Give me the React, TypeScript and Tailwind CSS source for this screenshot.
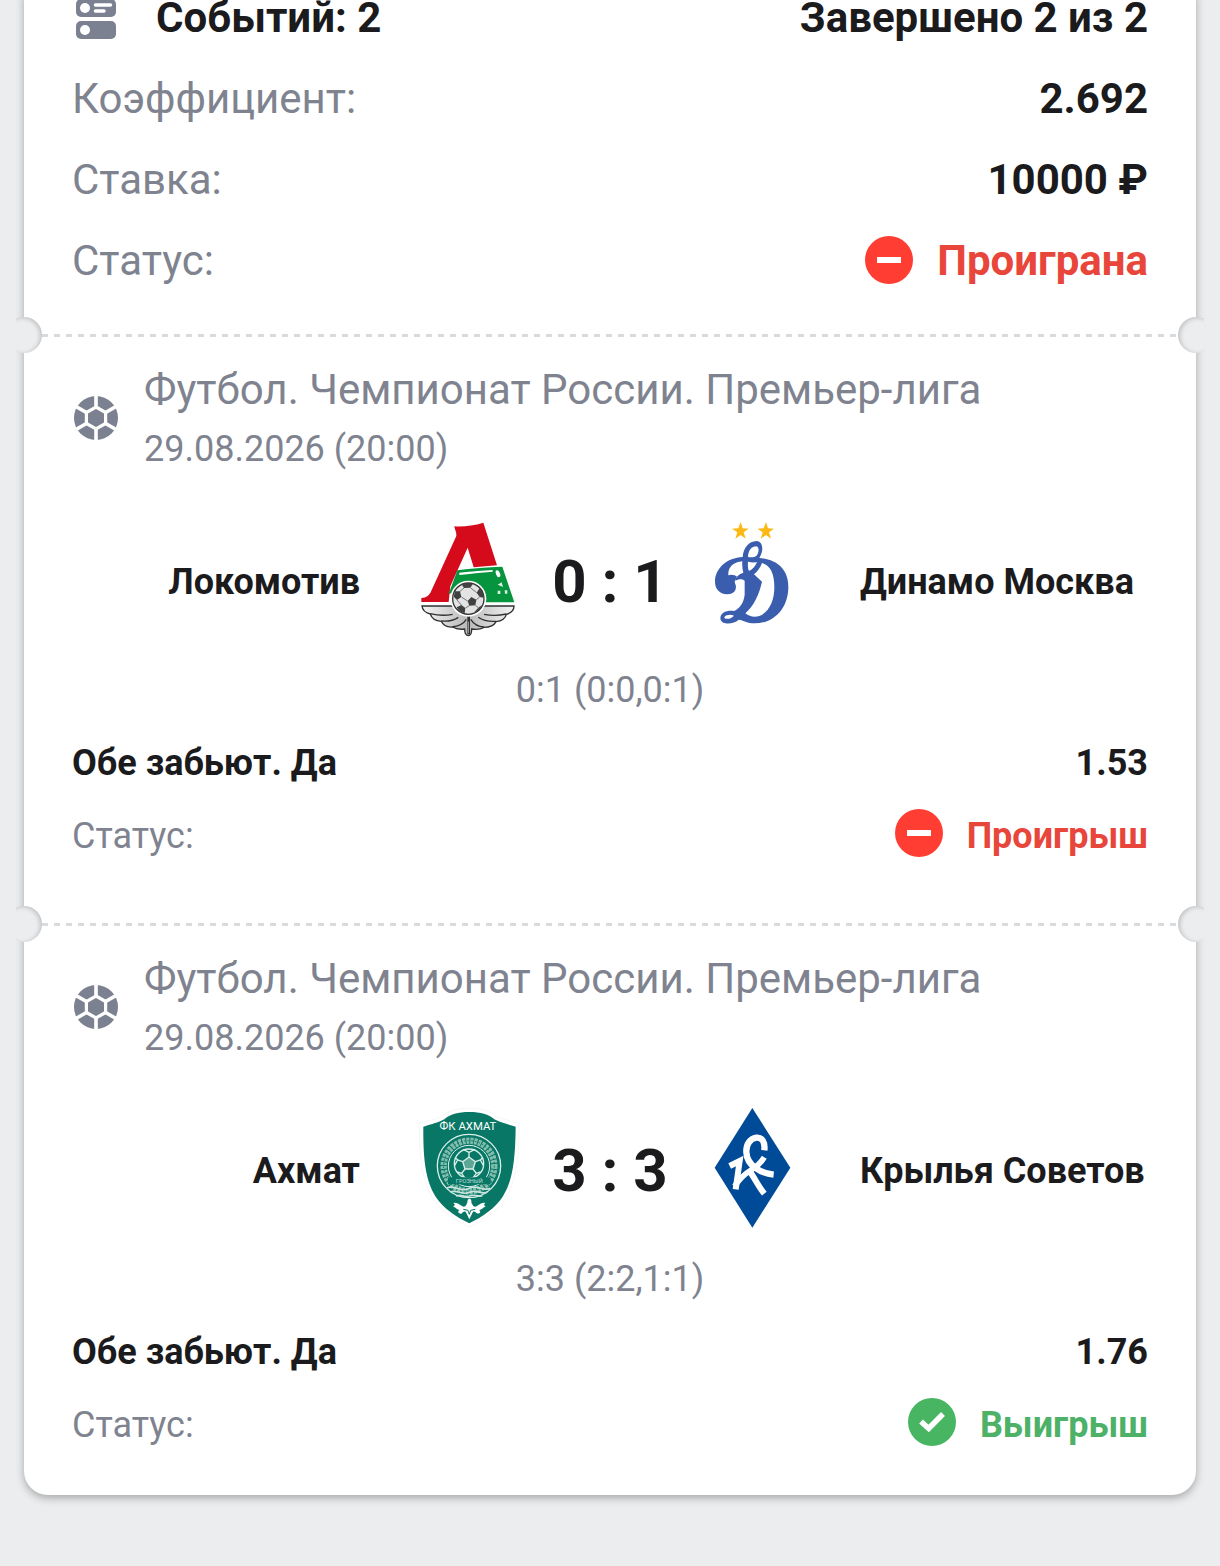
import type { ReactNode } from 'react';

type Outcome = 'lose' | 'win';

interface BetEvent {
  league: string;
  date: string;
  home: string;
  away: string;
  homeLogo: ReactNode;
  awayLogo: ReactNode;
  score: string;
  periods: string;
  market: string;
  odds: string;
  outcome: Outcome;
  status: string;
}

function ExpressIcon() {
  return (
    <svg className="w-12 h-12 shrink-0" viewBox="0 0 48 48" aria-hidden="true">
      <rect x="4" y="5" width="40" height="18" rx="5" fill="#7c8192" />
      <rect x="4" y="27" width="40" height="18" rx="5" fill="#7c8192" />
      <circle cx="13" cy="14" r="5" fill="#fff" />
      <circle cx="13" cy="36" r="5" fill="#fff" />
      <path d="M23.500 11H38.500M23.500 17H32" stroke="#fff" strokeWidth="3.500" strokeLinecap="round" />
    </svg>
  );
}

function FootballIcon() {
  return (
    <svg className="w-12 h-12 shrink-0" viewBox="0 0 48 48" aria-hidden="true">
      <circle cx="24" cy="24" r="22" fill="#7c8192" />
      <path
        d="M24 13L33.600 18.500V29.500L24 35L14.400 29.500V18.500Z"
        fill="none"
        stroke="#fff"
        strokeWidth="3.200"
      />
      <path
        d="M24 13V0M24 35V48M33.600 18.500L46 11.400M33.600 29.500L46 36.600M14.400 18.500L2 11.400M14.400 29.500L2 36.600"
        stroke="#fff"
        strokeWidth="3.600"
      />
    </svg>
  );
}

function OutcomeIcon({ outcome }: { outcome: Outcome }) {
  if (outcome === 'win') {
    return (
      <svg className="w-12 h-12 shrink-0" viewBox="0 0 48 48" aria-hidden="true">
        <circle cx="24" cy="24" r="24" fill="#48b563" />
        <path d="M13 23.500L20.700 30.500L35 16" fill="none" stroke="#fff" strokeWidth="5.500" />
      </svg>
    );
  }
  return (
    <svg className="w-12 h-12 shrink-0" viewBox="0 0 48 48" aria-hidden="true">
      <circle cx="24" cy="24" r="24" fill="#ff3d32" />
      <rect x="12" y="21" width="24" height="6" fill="#fff" />
    </svg>
  );
}

function LokomotivLogo() {
  return (
    <svg className="w-[120px] h-[120px] shrink-0" viewBox="24 42 360 360" role="img" aria-label="Локомотив">
      <defs>
        <linearGradient id="wing" x1="0" x2="1">
          <stop offset="0" stopColor="#f4f4f4" />
          <stop offset="0.500" stopColor="#b9b9b9" />
          <stop offset="1" stopColor="#f4f4f4" />
        </linearGradient>
      </defs>
      <path
        d="M66 303H342C342 316 334 324 319 328C316 341 304 348 288 350C282 362 268 367 252 367C240 374 226 374 215 372C215 386 213 392 205 392C197 392 194 384 194 372C180 374 167 372 158 366C142 367 129 361 124 349C106 348 95 340 91 327C76 323 67 316 66 303Z"
        fill="url(#wing)"
        stroke="#2f3030"
        strokeWidth="4"
      />
      <path
        d="M91 326C112 331 132 333 158 328M124 348C145 350 160 347 175 337M157 365C176 364 190 357 199 343M319 327C298 332 276 333 252 328M288 349C264 350 248 347 235 337M252 366C232 365 221 357 212 343"
        fill="none"
        stroke="#2f3030"
        strokeWidth="4"
      />
      <path d="M206 332V388" stroke="#2f3030" strokeWidth="8" />
      <path d="M205 350V384" stroke="#aaa" strokeWidth="3" />
      <path
        d="M163 64C190 66 221 62 250 53L291 181L221 187L203 128L151 244L146 291H64V279C80 278 88 271 94 257L169 93C170 80 164 74 163 64Z"
        fill="#d50b1c"
      />
      <path
        d="M172 196C215 189 262 187 307 185L343 292H252L240 240L146 267Z"
        fill="#07943f"
      />
      <path d="M178 203C215 199 251 197 278 195V200C243 202 210 207 178 210Z" fill="#fff" />
      <ellipse cx="294" cy="206" rx="6" ry="11" fill="#fff" transform="rotate(-22 294 206)" />
      <path d="M293 239l12 -7l4 14zM293 257h8v10h-8zM314 256h8v10h-7z" fill="#d9f2df" />
      <circle cx="205" cy="281" r="54" fill="#fff" />
      <circle cx="205" cy="281" r="47" fill="#e3e3e3" stroke="#333" strokeWidth="4" />
      <g fill="#414141">
        <path d="M184 237C194 233 210 233 218 238L211 248L192 249Z" />
        <path d="M239 249C247 256 251 268 251 278L239 276L230 263Z" />
        <path d="M214 276L229 284L226 301L208 302L203 288Z" />
        <path d="M165 259L180 259L184 276L171 285L161 275Z" />
        <path d="M170 307L184 300L196 309L194 325C184 323 176 318 170 307Z" />
        <path d="M224 320L235 308L246 300C241 312 234 319 224 324Z" />
      </g>
      <path
        d="M192 249L180 259M211 248L230 263M184 276L203 288M184 300L171 285M196 309L208 302M229 284L239 276M226 301L235 308"
        stroke="#777"
        strokeWidth="3"
      />
    </svg>
  );
}

function DynamoLogo() {
  return (
    <svg className="w-[120px] h-[120px] shrink-0" viewBox="6 42 360 360" role="img" aria-label="Динамо Москва">
      <g fill="#fdb913">
        <path d="M152 51L158 70L176 71L161 82L167 101L152 90L136 101L142 82L126 71L145 70Z" />
        <path d="M228 51L234 70L252 71L237 82L243 101L228 90L212 101L218 82L202 71L221 70Z" />
      </g>
      <path
        fill="#3a5dae"
        fillRule="evenodd"
        d="M137 240C141 257 129 269 111 268C88 267 75 251 75 230C75 190 111 158 158 156C160 129 176 109 200 108C214 109 219 123 216 139C214 148 211 154 208 159C263 164 295 194 295 245C295 309 253 355 194 355C172 355 160 346 146 344C136 353 121 357 107 355C94 353 89 344 92 334C96 322 111 315 132 318C149 310 161 294 164 269V227C155 220 145 222 135 227C138 215 147 207 160 203C157 192 156 181 157 169C130 171 113 187 115 211C124 207 135 210 142 216C134 222 132 231 137 240ZM174 156C185 158 193 157 199 153C208 141 208 126 199 124C185 124 175 136 174 156ZM174 170C173 183 174 192 177 198C188 194 196 183 201 172C192 172 183 173 174 170ZM216 174C211 187 203 199 192 208L216 230C207 270 192 301 166 325C178 334 192 338 208 333C239 321 253 285 253 247C253 207 242 181 216 174ZM107 341C117 343 126 339 132 332C121 327 109 330 104 335C102 338 103 340 107 341Z"
      />
    </svg>
  );
}

function AkhmatLogo() {
  return (
    <svg className="w-[120px] h-[120px] shrink-0" viewBox="24 39 360 360" role="img" aria-label="Ахмат">
      <path
        d="M208 40C244 40 271 47 290 65C306 72 330 77 356 84C358 199 346 266 314 315C290 351 249 376 208 396C167 376 126 351 102 315C69 266 57 199 58 84C84 77 108 72 124 65C143 47 171 40 208 40Z"
        fill="#fff"
        stroke="#eff2f1"
        strokeWidth="2"
      />
      <path
        d="M208 51C242 51 266 58 283 73C298 82 321 87 347 95C346 198 337 260 308 305C285 341 246 365 208 385C169 365 130 341 107 305C78 260 69 198 70 95C95 87 118 82 133 73C150 58 174 51 208 51Z"
        fill="#087766"
      />
      <text
        x="204"
        y="105"
        textAnchor="middle"
        fill="#fff"
        fontSize="34"
        className="font-['Roboto',sans-serif] font-normal"
      >
        ФК АХМАТ
      </text>
      <g fill="none" stroke="#d8efe9">
        <circle cx="207" cy="213" r="95" strokeWidth="4" />
        <circle cx="207" cy="213" r="76" stroke="#82bdae" strokeWidth="19" strokeDasharray="9 3" />
        <circle cx="207" cy="213" r="76" stroke="#087766" strokeWidth="3" strokeDasharray="5 6" />
        <circle cx="207" cy="213" r="62" strokeWidth="3" />
      </g>
      <circle cx="207" cy="206" r="44" fill="#087766" stroke="#d8efe9" strokeWidth="4" />
      <path
        d="M207 186L226 200L219 222H195L188 200Z"
        fill="#5ea696"
        stroke="#d8efe9"
        strokeWidth="4"
      />
      <path
        d="M207 186V172L190 163M207 172L225 163M226 200L241 195L248 188M241 195L250 211M219 222L229 235L220 247M229 235L242 231M195 222L185 235L193 247M185 235L172 231M188 200L173 195L166 188M173 195L164 211"
        fill="none"
        stroke="#d8efe9"
        strokeWidth="4"
      />
      <path d="M144 247H272V268H144Z" fill="#087766" />
      <text
        x="208"
        y="263"
        textAnchor="middle"
        fill="#b7dcd3"
        fontSize="17"
        className="font-['Roboto',sans-serif] font-normal"
      >
        ГРОЗНЫЙ
      </text>
      <path
        d="M141 279C164 267 176 293 204 281C233 266 247 291 271 280M151 291C171 282 186 303 208 292C230 281 244 301 262 291M168 303C183 296 193 308 208 303C224 296 234 307 247 302"
        fill="none"
        stroke="#c7e4dd"
        strokeWidth="5"
      />
      <path
        d="M160 324C173 321 181 333 191 335C199 335 199 326 202 324C201 316 205 311 208 311C212 311 216 317 214 324C217 326 218 335 226 335C236 333 243 321 256 324C250 328 252 332 257 335C249 336 246 344 237 345C245 350 239 358 231 355C227 354 227 348 219 350L208 373L197 350C189 348 189 354 184 356C176 357 171 349 179 345C171 344 167 336 159 335C166 331 166 328 160 324Z"
        fill="#fff"
      />
      <path d="M190 343L204 346L208 358L212 346L226 343" fill="none" stroke="#087766" strokeWidth="3" />
    </svg>
  );
}

function KrylyaLogo() {
  return (
    <svg className="w-[120px] h-[120px] shrink-0" viewBox="6 39 360 360" role="img" aria-label="Крылья Советов">
      <path d="M187 39L301 218L187 398L74 218Z" fill="#004b98" />
      <path
        d="M223 166C226 141 216 126 199 128C180 131 168 148 169 171C170 193 180 208 197 219C212 230 230 237 251 239"
        fill="none"
        stroke="#fff"
        strokeWidth="19"
      />
      <path
        d="M223 187C213 203 199 216 182 226C162 238 148 252 134 274"
        fill="none"
        stroke="#fff"
        strokeWidth="17"
      />
      <path
        d="M119 213L149 198L137 283M178 228C193 246 203 272 223 296"
        fill="none"
        stroke="#fff"
        strokeWidth="18"
      />
    </svg>
  );
}

const events: BetEvent[] = [
  {
    league: 'Футбол. Чемпионат России. Премьер-лига',
    date: '29.08.2026 (20:00)',
    home: 'Локомотив',
    away: 'Динамо Москва',
    homeLogo: <LokomotivLogo />,
    awayLogo: <DynamoLogo />,
    score: '0 : 1',
    periods: '0:1 (0:0,0:1)',
    market: 'Обе забьют. Да',
    odds: '1.53',
    outcome: 'lose',
    status: 'Проигрыш',
  },
  {
    league: 'Футбол. Чемпионат России. Премьер-лига',
    date: '29.08.2026 (20:00)',
    home: 'Ахмат',
    away: 'Крылья Советов',
    homeLogo: <AkhmatLogo />,
    awayLogo: <KrylyaLogo />,
    score: '3 : 3',
    periods: '3:3 (2:2,1:1)',
    market: 'Обе забьют. Да',
    odds: '1.76',
    outcome: 'win',
    status: 'Выигрыш',
  },
];

function TicketDivider() {
  return (
    <div className="relative h-9 flex items-center px-[18px]" aria-hidden="true">
      <span className="absolute -left-2 top-0 w-[26px] h-9 flex justify-end overflow-hidden">
        <span className="w-9 h-9 shrink-0 rounded-full bg-[#ebedef] shadow-[inset_-2px_1px_4px_rgba(0,0,0,0.18)]" />
      </span>
      <span className="absolute -right-2 top-0 w-[26px] h-9 flex justify-start overflow-hidden">
        <span className="w-9 h-9 shrink-0 rounded-full bg-[#ebedef] shadow-[inset_2px_1px_4px_rgba(0,0,0,0.18)]" />
      </span>
      <div className="h-[3px] flex-1 bg-[repeating-linear-gradient(90deg,#d9dadb_0_6px,transparent_6px_12px)]" />
    </div>
  );
}

function SummaryRow({ label, children }: { label: string; children: ReactNode }) {
  return (
    <div className="flex items-center justify-between">
      <dt className="text-[#7f838f]">{label}</dt>
      <dd className="font-bold">{children}</dd>
    </div>
  );
}

function EventSection({ event }: { event: BetEvent }) {
  return (
    <section className="px-12 pt-3 pb-[43px] text-[36px] leading-[42px]">
      <header className="flex items-center gap-6 text-[#7f838f]">
        <FootballIcon />
        <div>
          <h2 className="text-[42px] leading-[50px]">{event.league}</h2>
          <p className="mt-[13px]">{event.date}</p>
        </div>
      </header>

      <div className="mt-[49px] grid grid-cols-[1fr_auto_1fr] items-center gap-12 font-bold">
        <span className="pt-1.5 text-right">{event.home}</span>
        <div className="flex items-center">
          {event.homeLogo}
          <span className="w-[164px] pt-1.5 text-center text-[60px] leading-[72px]">{event.score}</span>
          {event.awayLogo}
        </div>
        <span className="pt-1.5 whitespace-nowrap">{event.away}</span>
      </div>

      <p className="mt-[30px] text-center text-[#7f838f]">{event.periods}</p>

      <div className="mt-[31px] flex justify-between font-bold">
        <span>{event.market}</span>
        <span>{event.odds}</span>
      </div>

      <div className="mt-[25px] flex justify-between leading-[54px]">
        <span className="text-[#7f838f]">Статус:</span>
        <span
          className={`flex items-start gap-6 font-bold ${event.outcome === 'win' ? 'text-[#4db167]' : 'text-[#e8463a]'}`}
        >
          <OutcomeIcon outcome={event.outcome} />
          {event.status}
        </span>
      </div>
    </section>
  );
}

export default function App() {
  return (
    <div className="min-h-screen overflow-hidden bg-[#ebedef] px-6 pb-[71px] font-['Roboto',sans-serif] text-[#1b1b1d]">
      <main className="-mt-[7px] rounded-b-3xl bg-white shadow-[0_3px_8px_rgba(0,0,0,0.3)]">
        <section className="px-12 pb-8 text-[42px] leading-[49px]">
          <div className="flex items-center justify-between font-bold">
            <h1 className="flex items-center gap-9">
              <ExpressIcon />
              Событий: 2
            </h1>
            <span>Завершено 2 из 2</span>
          </div>
          <dl className="mt-8 flex flex-col gap-8">
            <SummaryRow label="Коэффициент:">2.692</SummaryRow>
            <SummaryRow label="Ставка:">10000 ₽</SummaryRow>
            <SummaryRow label="Статус:">
              <span className="flex items-start gap-6 text-[#e8463a]">
                <OutcomeIcon outcome="lose" />
                Проиграна
              </span>
            </SummaryRow>
          </dl>
        </section>

        {events.map((event, index) => (
          <div key={index}>
            <TicketDivider />
            <EventSection event={event} />
          </div>
        ))}
      </main>
    </div>
  );
}
